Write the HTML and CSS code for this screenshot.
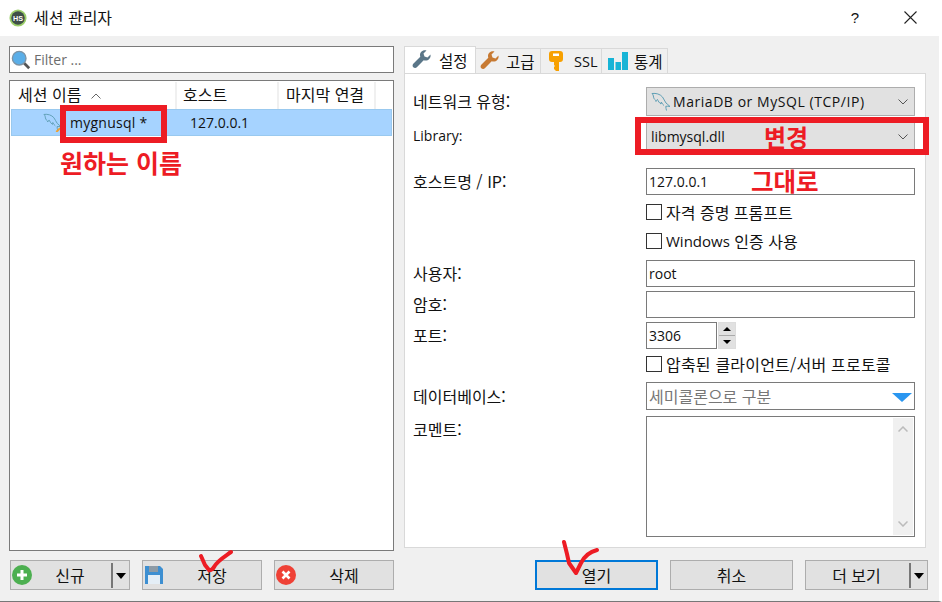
FILE: index.html
```html
<!DOCTYPE html>
<html lang="ko">
<head>
<meta charset="utf-8">
<title>세션 관리자</title>
<link rel="stylesheet" href="styles.css">
</head>
<body>
<svg class="defs" width="0" height="0">
  <defs>
    <symbol id="dolphin" viewBox="0 0 20 20">
      <path d="M1 1.500c2 2 1 3 2 5 1 1.500 1.500 1 2 3 .6-1.500 1-2 1.500-2 .8 2 2 3.500 3.500 4.500 0-1 0-1.500.3-2 .6 1.500 1.500 2.500 2.700 3.500M1 1.500c4-.5 8 .5 10.500 3.500 1.500 2 2 4 3.500 6 1 1 2.500 2 4 3.500-1.500-.3-3-.5-4.200-.2.200 1.500.200 3 .700 4.200" fill="none" stroke="#5f9fb5" stroke-width="1"/>
    </symbol>
    <symbol id="wrench" viewBox="0 0 20 20">
      <path d="M18.500 4.500l-3 3-3-1-1-3 3-3c-3-.8-6.500 1-6.500 4.500 0 .8.100 1.300.3 1.800L1.500 13.500c-1.200 1.200-1.200 2.800-.2 3.800s2.700 1 3.800-.2l6.600-6.800c.6.200 1.200.3 1.800.3 3.500 0 5.500-3 5-5.600z"/>
    </symbol>
  </defs>
</svg>
<div class="window">
  <header class="titlebar">
    <svg class="app-icon" viewBox="0 0 20 20"><circle cx="10" cy="10" r="9.500" fill="#9ccf6a"/><circle cx="10" cy="10" r="7.500" fill="#3f4f48"/><text x="10" y="13" class="hs">HS</text></svg>
    <span class="app-title">세션 관리자</span>
    <span class="help">?</span>
    <svg class="close" viewBox="0 0 13 13"><path d="M.5.5l12 12M12.500.5l-12 12" stroke="#222" stroke-width="1.100" fill="none"/></svg>
  </header>

  <main class="content">
    <section class="left">
      <div class="filter">
        <svg class="search" viewBox="0 0 22 22"><path d="M14 14l6 6" stroke="#555" stroke-width="3"/><circle cx="9" cy="9" r="7.500" fill="#5aaee8" stroke="#7c93a5" stroke-width="1.500"/></svg>
        <span>Filter ...</span>
      </div>
      <div class="list">
        <div class="list-head">
          <div class="col c1">세션 이름 <svg class="sort" viewBox="0 0 10 6"><path d="M.5 5.500L5 1l4.500 4.500" fill="none" stroke="#666"/></svg></div>
          <div class="col c2">호스트</div>
          <div class="col c3">마지막 연결</div>
        </div>
        <div class="list-row">
          <svg class="row-icon" viewBox="0 0 20 20"><use href="#dolphin"/><path d="M14 20l4-4" stroke="#f0a030" stroke-width="2"/></svg>
          <span class="row-name">mygnusql *</span>
          <span class="row-host">127.0.0.1</span>
        </div>
      </div>
      <div class="btn-row left-btns">
        <button class="btn iconed split"><svg class="btn-icon" viewBox="0 0 20 20"><circle cx="10" cy="10" r="10" fill="#4caf50"/><path d="M10 5v10M5 10h10" stroke="#fff" stroke-width="3"/></svg><span class="label">신규</span><span class="drop"><i></i></span></button>
        <button class="btn iconed"><svg class="btn-icon" viewBox="0 0 20 20"><path d="M1 1h15l3 3v15H1z" fill="#3d8fd1"/><rect x="5" y="1" width="9" height="6" fill="#8d9ba6"/><rect x="4" y="10" width="12" height="9" fill="#e4eef6"/></svg><span class="label">저장</span></button>
        <button class="btn iconed"><svg class="btn-icon" viewBox="0 0 20 20"><circle cx="10" cy="10" r="10" fill="#ef4136"/><path d="M6.500 6.500l7 7M13.500 6.500l-7 7" stroke="#fff" stroke-width="2.600"/></svg><span class="label">삭제</span></button>
      </div>
    </section>

    <section class="right">
      <div class="tabs">
        <div class="tab active"><svg class="tab-icon wr-grey"><use href="#wrench"/></svg>설정</div>
        <div class="tab"><svg class="tab-icon wr-orange"><use href="#wrench"/></svg>고급</div>
        <div class="tab latin-tab"><svg class="tab-icon" viewBox="0 0 20 20"><path d="M6 0h8a3 3 0 0 1 3 3v5a3 3 0 0 1-3 3h-1v9h-3l-2-2v-2l1-1-1-1v-3H6a3 3 0 0 1-3-3V3a3 3 0 0 1 3-3z" fill="#f7a000"/><rect x="7" y="2.500" width="6" height="2.500" fill="#fff"/></svg>SSL</div>
        <div class="tab"><svg class="tab-icon" viewBox="0 0 20 20"><path d="M0 7h6v12H0zM7.500 11h5.500v8H7.500zM14 1h6v18h-6z" fill="#17b4d6"/></svg>통계</div>
      </div>
      <div class="pane">
        <div class="form">
          <label class="f-label r-net">네트워크 유형:</label>
          <div class="combo r-net"><svg class="combo-icon"><use href="#dolphin"/></svg><span class="wide">MariaDB or MySQL (TCP/IP)</span><svg class="chev" viewBox="0 0 10 6"><path d="M.5.500L5 5 9.500.5" fill="none" stroke="#555"/></svg></div>
          <label class="f-label latin r-lib">Library:</label>
          <div class="combo r-lib">libmysql.dll<svg class="chev" viewBox="0 0 10 6"><path d="M.5.500L5 5 9.500.5" fill="none" stroke="#555"/></svg></div>
          <label class="f-label r-host">호스트명 / IP:</label>
          <div class="input r-host">127.0.0.1</div>
          <div class="check r-c1"><i></i>자격 증명 프롬프트</div>
          <div class="check r-c2"><i></i><span class="latin-w">Windows</span>&nbsp;인증 사용</div>
          <label class="f-label r-user">사용자:</label>
          <div class="input r-user">root</div>
          <label class="f-label r-pass">암호:</label>
          <div class="input r-pass"></div>
          <label class="f-label r-port">포트:</label>
          <div class="port r-port">
            <div class="input port-input">3306</div>
            <div class="spin"><span class="up"></span><span class="down"></span></div>
          </div>
          <div class="check r-c3"><i></i>압축된 클라이언트/서버 프로토콜</div>
          <label class="f-label r-db">데이터베이스:</label>
          <div class="input db r-db">세미콜론으로 구분<b></b></div>
          <label class="f-label top r-note">코멘트:</label>
          <div class="input note r-note"><div class="scroll"><svg viewBox="0 0 10 6"><path d="M.5 5.500L5 1l4.500 4.500" fill="none" stroke="#bbb" stroke-width="1.500"/></svg><svg viewBox="0 0 10 6"><path d="M.5.500L5 5 9.500.5" fill="none" stroke="#bbb" stroke-width="1.500"/></svg></div></div>
        </div>
      </div>
      <div class="btn-row right-btns">
        <button class="btn primary"><span class="label">열기</span></button>
        <button class="btn"><span class="label">취소</span></button>
        <button class="btn split"><span class="label">더 보기</span><span class="drop"><i></i></span></button>
      </div>
    </section>
  </main>

  <div class="mark box-name"></div>
  <div class="mark box-lib"></div>
  <div class="note-red n1">원하는 이름</div>
  <div class="note-red n2">변경</div>
  <div class="note-red n3">그대로</div>
  <svg class="scribble" viewBox="0 0 942 602"><path d="M201 556l4 9 4 5c1 1 4-1 5-3 3-6 10-10 17-15M564 542l3 12 2 9 7 10 5-10c3-6 8-11 16-13" fill="none" stroke="#ed1c24" stroke-width="4" stroke-linecap="round" stroke-linejoin="round"/></svg>
</div>
</body>
</html>
```
FILE: styles.css
```css
* { box-sizing: border-box; }
html, body { margin: 0; padding: 0; }
body {
  width: 942px; height: 602px; overflow: hidden; background: #fff;
  font-family: "Noto Sans CJK KR", "Noto Sans", sans-serif;
  font-size: 16px; color: #111;
}
.defs { position: absolute; }
.window {
  position: relative; width: 942px; height: 602px;
  background: #f0f0f0; border-right: 3px solid #fff; border-bottom: 1px solid #777;
  display: flex; flex-direction: column;
}
.titlebar { height: 36px; background: #fff; display: flex; align-items: center; padding-left: 9px; flex: none; }
.app-icon { width: 18px; height: 18px; margin-top: -1px; }
.hs { font: 700 8px "Liberation Sans", sans-serif; fill: #fff; text-anchor: middle; }
.app-title { margin-left: 7px; font-size: 16px; margin-top: -2px; }
.help { margin-left: auto; font-size: 15px; margin-right: 45px; margin-top: -2px; font-family: "Liberation Sans", sans-serif; }
.close { width: 13px; height: 13px; margin-right: 22px; margin-top: -2px; }

.content { flex: 1; display: flex; padding: 10px 13px 11px 9px; }
.left { width: 385px; display: flex; flex-direction: column; flex: none; }
.filter {
  height: 27px; background: #fff; border: 1px solid #7a7a7a; display: flex; align-items: center;
  padding-left: 1px; color: #6d6d6d; font: 14px "Open Sans", sans-serif; flex: none;
}
.search { width: 20px; height: 20px; margin-right: 3px; }
.list { height: 471px; margin-top: 7px; background: #fff; border: 1px solid #7a7a7a; padding: 1px; flex: none; }
.list-head { display: flex; height: 27px; }
.col { padding-left: 7px; line-height: 24px; border-right: 2px solid #f0f0f0; font-size: 16px; white-space: nowrap; }
.c1 { width: 166px; flex: none; }
.c2 { width: 102px; padding-left: 6px; flex: none; }
.c3 { width: 97px; flex: none; }
.sort { width: 10px; height: 6px; margin-left: 5px; vertical-align: 2px; }
.list-row {
  height: 27px; background: #a6d3ff; border: 1px solid #99c9ef; display: flex; align-items: center;
  font: 14px "Open Sans", sans-serif;
}
.row-icon { width: 19px; height: 19px; margin-left: 31px; flex: none; }
.row-name { margin-left: 8px; width: 120px; letter-spacing: .25px; }

.btn-row { display: flex; flex: none; }
.left-btns { margin-top: 9px; margin-left: 1px; gap: 12px; }
.btn {
  position: relative; height: 30px; width: 120px; background: #e1e1e1; border: 1px solid #adadad; padding: 0;
  font: 16px "Noto Sans CJK KR", sans-serif; color: #111; display: flex; align-items: center; justify-content: center; flex: none;
}
.btn-icon { position: absolute; left: 1px; top: 4px; width: 20px; height: 20px; }
.btn.iconed { padding-left: 20px; }
.btn.split { padding-right: 20px; }
.drop { position: absolute; right: 0; top: 2px; bottom: 1px; width: 18px; border-left: 2px solid #777; display: flex; align-items: center; justify-content: center; }
.drop i { border: 5.500px solid transparent; border-top: 6px solid #000; border-bottom: 0; }

.right { margin-left: 10px; width: 522px; display: flex; flex-direction: column; }
.tabs { display: flex; height: 27px; align-items: flex-end; flex: none; }
.tab {
  height: 25px; display: flex; align-items: center; gap: 6px; background: #f0f0f0; flex: none;
  border: 1px solid #d9d9d9; border-bottom: 0; border-left: 0; padding: 0 0 0 4px;
  font: 15.500px "Noto Sans CJK KR", sans-serif;
}
.tab:nth-child(2) { width: 65px; }
.tab:nth-child(3) { width: 61px; padding-left: 5px; gap: 8px; font: 14.500px "Open Sans", sans-serif; }
.tab:nth-child(4) { width: 66px; padding-left: 6px; }
.tab.active { height: 27px; width: 72px; background: #fff; border-left: 1px solid #d9d9d9; padding-left: 7px; gap: 7px; }
.tab-icon { width: 20px; height: 20px; flex: none; }
.wr-grey { fill: #5a7688; }
.wr-orange { fill: #c77a33; }
.pane { height: 475px; background: #fff; border: 1px solid #d9d9d9; padding: 0 10px 0 8px; flex: none; }
.form {
  display: grid; grid-template-columns: 233px 269px;
  grid-template-rows: 29px 34px 18px 27px 9px 16px 13px 16px 11px 27px 4px 27px 4px 27px 7px 16px 10px 28px 6px 121px;
  padding-top: 13px;
}
.f-label { font-size: 16px; grid-column: 1; align-self: center; line-height: 20px; padding-bottom: 1px; white-space: nowrap; }
.f-label.latin { font: 14px/20px "Open Sans", sans-serif; }
.f-label.top { align-self: start; margin-top: 3px; }
.combo, .input { grid-column: 2; }
.combo {
  background: #e1e1e1; border: 1px solid #adadad; display: flex; align-items: center; padding-left: 4px;
  font: 14px "Open Sans", sans-serif; position: relative;
}
.combo-icon { width: 20px; height: 20px; margin-right: 2px; flex: none; }
.wide { letter-spacing: .55px; white-space: nowrap; }
.chev { position: absolute; right: 6px; top: 11px; width: 10px; height: 6px; }
.input { background: #fff; border: 1px solid #7a7a7a; display: flex; align-items: center; padding-left: 2px; font: 14px "Open Sans", sans-serif; }
.r-net { grid-row: 1; }
.combo.r-lib { grid-row: 2; margin-top: 6px; }
.f-label.r-lib { grid-row: 2; margin-top: 7px; }
.r-host { grid-row: 4; }
.r-c1 { grid-row: 6; }
.r-c2 { grid-row: 8; }
.r-user { grid-row: 10; }
.r-pass { grid-row: 12; }
.r-port { grid-row: 14; }
.r-c3 { grid-row: 16; }
.r-db { grid-row: 18; }
.r-note { grid-row: 20; }
.check { grid-column: 2; display: flex; align-items: center; font-size: 16px; white-space: nowrap; }
.check i { width: 16px; height: 16px; background: #fff; border: 1px solid #333; margin-right: 4px; flex: none; }
.r-c3 { letter-spacing: .2px; }
.latin-w { font: 15px "Open Sans", sans-serif; }
.port { grid-column: 2; display: flex; gap: 1px; }
.port-input { width: 71px; flex: none; }
.spin { width: 18px; display: flex; flex-direction: column; border: 1px solid #ddd; background: #e1e1e1; }
.spin span { flex: 1; display: flex; align-items: center; justify-content: center; }
.spin .up { border-bottom: 1px solid #aaa; }
.spin .up::after { content: ""; border: 4px solid transparent; border-bottom: 4px solid #000; border-top: 0; }
.spin .down::after { content: ""; border: 4px solid transparent; border-top: 4px solid #000; border-bottom: 0; }
.db { font-family: "Noto Sans CJK KR", sans-serif; font-size: 16px; color: #777; position: relative; }
.db b { position: absolute; right: 2px; top: 10px; border: 10px solid transparent; border-top: 9px solid #2a96f0; border-bottom: 0; }
.note { align-items: stretch; justify-content: flex-end; padding: 1px; }
.scroll { width: 20px; background: #f0f0f0; display: flex; flex-direction: column; justify-content: space-between; align-items: center; padding: 8px 0; }
.scroll svg { width: 10px; height: 6px; }
.right-btns { margin-top: 12px; margin-left: 131px; gap: 12px; }
.right-btns .btn { width: 123px; }
.btn.primary { border: 2px solid #0078d7; }

.mark { position: absolute; border: 6px solid #ed1c24; }
.box-name { left: 60px; top: 105px; width: 107px; height: 38px; }
.box-lib { left: 635px; top: 117px; width: 294px; height: 38px; }
.note-red { position: absolute; color: #ed1c24; font-weight: 700; white-space: nowrap; line-height: 1; }
.n1 { left: 60px; top: 150px; font-size: 25px; }
.n2 { left: 764px; top: 125px; font-size: 24px; }
.n3 { left: 751px; top: 169px; font-size: 24.500px; }
.scribble { position: absolute; left: 0; top: 0; width: 942px; height: 602px; pointer-events: none; }
```
